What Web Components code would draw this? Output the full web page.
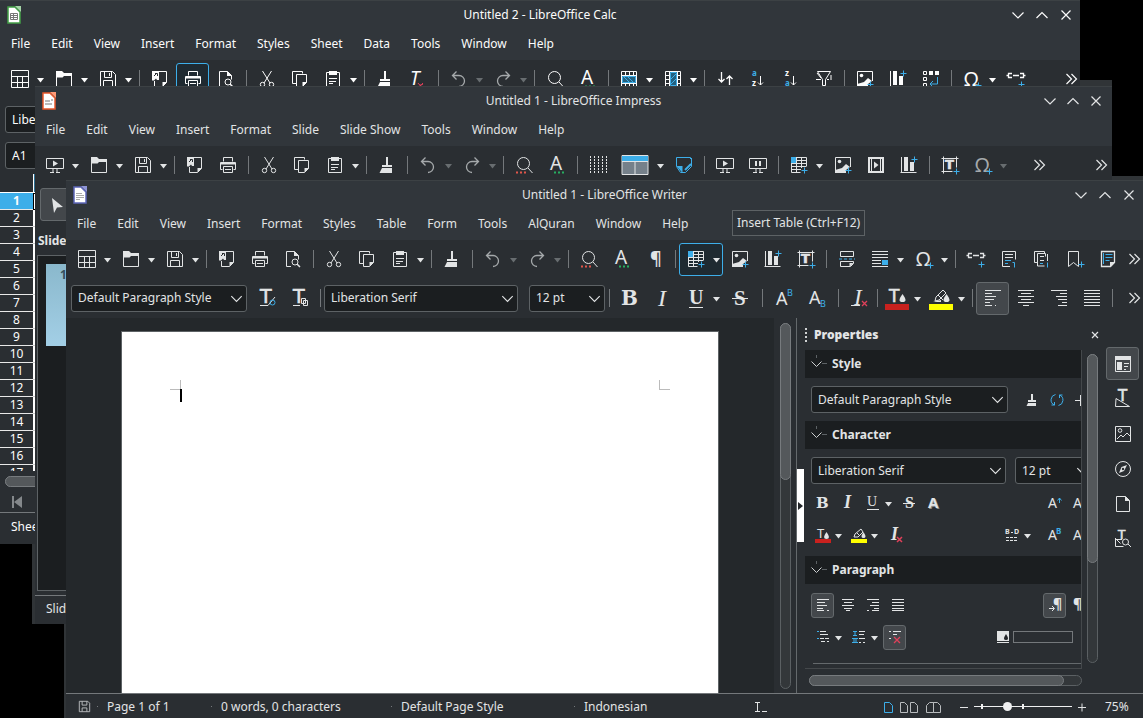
<!DOCTYPE html>
<html lang="en">
<head>
<meta charset="utf-8">
<title>LibreOffice windows</title>
<style>
  html, body { margin: 0; height: 100%; background: #000; overflow: hidden; }
  body { font: 12px/18px "Noto Sans", sans-serif; color: #fcfcfc; }
</style>
</head>
<body>
<office-desktop></office-desktop>

<script>
const plus = (x, y) => `<path class="b" d="M${x - 3} ${y}h6M${x} ${y - 3}v6"/>`;

/* Icons are drawn on an 18 x 18 grid */
const ICONS = {
  template: '<path d="M.5 .5h17v17h-17zM.5 6.5h17M.5 12.5h17M6.5 6.5v11M11.5 6.500v11"/>',
  open: '<path d="M1.5 5v11.5h15v-11h-8"/><path class="f" d="M1 1h6l2 2h8v3H9L7.5 7.500H1z"/>',
  save: '<path d="M1.500 1.500h12l3 3v12h-15zM5.500 1.500v6h7v-6M10.500 3v3M4.500 16.500v-6h9v6"/>',
  savesmall: '<path d="M3.500 3.500h9l2 2v9h-11zM6.500 3.500v4h5v-4M6.500 14.500v-4h5v4"/>',
  pdf: '<path d="M8 1.500h7.500v11l-4 4h-8V11"/><path class="f" d="M15.500 12v.500l-4 4v-4.500zM1 1h7v9H6L5 8.500 3 10.500H1z"/><path stroke="#2a2e32" d="M3 6l3-3M4 3.500h2.500V6"/>',
  print: '<path d="M4.500 5.500v-4h9v4M3.500 13.500h-2v-7h15v7h-2M4.500 10.500h9v6h-9zM6 13.500h6"/><path class="f" d="M2 6h14v2.500H2z"/>',
  preview: '<path d="M7 16.500H2.500v-15h8l4 4v4"/><path class="f" d="M10 1l5 5h-5z"/><circle cx="11" cy="12" r="3"/><path stroke-width="1.500" d="M13 14l3 3"/>',
  cut: '<path d="M4.500 1l7.500 12M13.500 1L6 13"/><circle cx="4.500" cy="14.500" r="2.200"/><circle cx="13.500" cy="14.500" r="2.200"/>',
  copy: '<path d="M5 13.500H1.500v-12h10v2M5.500 4.500h10v8l-4 4h-6z"/><path class="f" d="M15.500 12v.500l-4 4V12z"/>',
  paste: '<path d="M2.500 2.500h13v14h-13zM5 8.500h8M5 11.500h7M5 13.500h4"/><path class="f" d="M5 1h8v4H5z"/>',
  brush: '<path class="f" d="M8 1h2v8h4v2H4V9h4zM4 12h10v5H1.500z"/>',
  clear: '<text x="1" y="15" font-size="19" font-style="italic">T</text><path class="r" d="M9 13q2 4 5 0M9 17l5-3"/>',
  undo: '<path stroke-width="1.300" d="M6.500 1.500l-4 4 4 4M3 5.500h6a5.500 5.500 0 0 1 0 11"/>',
  redo: '<path stroke-width="1.300" d="M11.500 1.500l4 4-4 4M15 5.500H9a5.500 5.500 0 0 0 0 11"/>',
  find: '<circle cx="8.500" cy="7.500" r="6"/><path d="M13 12l4.500 5"/><path stroke="#e0564a" stroke-width="2" stroke-dasharray="2 2" d="M1 16.500h10"/>',
  findplain: '<circle cx="8.500" cy="7.500" r="6"/><path d="M13 12l4.500 5"/>',
  spell: '<text x="2" y="14" font-size="19">A</text><path stroke="#27ae60" stroke-width="2" stroke-dasharray="2 2" d="M6 16.500h11"/>',
  pilcrow: '<text x="4" y="15" font-size="18" font-weight="600">¶</text>',
  table: '<path d="M1.500 1.500h15v9M1.500 1.500v15h9M6.500 1v15M11.500 1v11M1 4.500h16M1 7.500h16M1 10.500h15M1 13.500h10"/><path class="bf" d="M1 1h5v6H1z"/>' + plus(14.5, 14.5),
  image: '<path d="M16.500 11V1.500h-15v15h9"/><path class="f" d="M1 17v-3l7-2 4-4 4 3-4 3v3z"/><circle class="f" cx="5.500" cy="5.500" r="1.800"/>' + plus(14.500, 14.500),
  chart: '<path d="M1.500 1v16M.500 16.500h16"/><path class="f" d="M4 1h4v14H4zM10 6h4v9h-4z"/>' + plus(14.5, 3.5),
  textbox: '<path d="M.500 2.500h17M2.500.500v17M15.500.500v11M.500 15.500h11"/><text x="4" y="13" font-size="13" font-weight="700" class="d">T</text>' + plus(15.500, 15.500),
  pagebreak: '<path d="M2.500 6.500v-5h13v5zM2.500 11.500h13v2l-3 3h-10z"/><path class="f" d="M15.500 13l-4 4v-4z"/><path class="b" stroke-dasharray="3 2" d="M1 9h16"/>',
  field: '<path d="M1 1.500h16M1 4.500h16M1 7.500h16M1 10.500h9M1 13.500h9M1 16.500h16"/><path class="bf" d="M11 10h6v5h-6z"/>',
  omega: '<text x="1" y="16" font-size="20">Ω</text>' + plus(15.5, 15.5),
  link: '<path stroke-width="1.300" d="M5 3.500h-3.500v4H5M13 3.500h3.500v4H13M6 5.500h6M-.500 5.500h2M16.500 5.500h2"/>' + plus(14.5, 14.5),
  footnote: '<path d="M10 16.500H2.500v-15h13v8M5 4.500h8M5 7.500h8"/><path class="b" d="M5 10.500h6M5 13.500h3M12.500 12.500h2v5"/>',
  endnote: '<path d="M4 12.500H1.500v-11h10v2M4.500 3.500h8v3M4.500 3.500v12.500h7M14.500 4v7M7 6.500h4M7 10.500h4"/><path class="b" d="M7 13.500h3M14.500 12.500v5"/>',
  bookmark: '<path d="M2.500 1.500h10v15l-5-4-5 4z"/>' + plus(15.5, 14.500),
  crossref: '<path stroke-width="1.300" d="M2.500 1.500h13v11l-4 4h-9z"/><path class="f" d="M16 12l-5 5v-5z"/><path class="b" d="M4.500 3v11M6.500 4.500h7M6.500 7.500h7M6.500 10.500h4"/>',
  more: '<path stroke-width="1.200" d="M4.500 4l5 5-5 5M9.500 4l5 5-5 5"/>',
  updstyle: '<text class="d" x="2" y="14" font-size="19">T</text><path d="M2 16.500h8L17 8"/><circle class="b" cx="14.500" cy="13.500" r="2.500"/>',
  newstyle: '<text class="d" x="2" y="14" font-size="19">T</text><path d="M2 16.500h7M10.500 9.500h4v5h-4zM12.500 11.500h4v5h-4z"/>',
  bold: '<text class="ds" x="0" y="16" font-size="20" font-weight="700">B</text>',
  italic: '<text class="s" x="4" y="17" font-size="24" font-style="italic">I</text>',
  underline: '<text class="s" x="2" y="15" font-size="20" font-weight="700">U</text><path d="M2 18.500h14"/>',
  strike: '<text class="s" x="3" y="16" font-size="21" font-weight="700">S</text><path d="M1 9.500h16"/>',
  super: '<text x="0" y="16" font-size="18">A</text><text class="bt" x="11" y="7" font-size="9">B</text>',
  sub: '<text x="0" y="15" font-size="18">A</text><text class="bt" x="11" y="18" font-size="9">B</text>',
  clearfmt: '<text class="s" x="4" y="16" font-size="23" font-style="italic">I</text><path d="M1 16.500h9"/><path class="r" stroke-width="1.300" d="M12 12l5 5M17 12l-5 5"/>',
  fontcolor: '<text class="d" x="1" y="13" font-size="17">T</text><path class="f" d="M14.500 5q6 8 0 8t0-8z"/><path fill="#c9211e" stroke="none" d="M-3 15h24v6H-3z"/>',
  marker: '<path d="M3 12l1-4 7-7 3 3-7 7zM6 6l5 5"/><path class="f" d="M14.500 5q6 8 0 8t0-8zM1 13h8v-2z"/><path fill="#ff0" stroke="none" d="M-3 15h24v6H-3z"/>',
  left: '<path d="M1 1.500h16M1 4.500h7M1 7.500h11M1 10.500h9M1 13.500h5M1 16.500h7M11 16.500h1"/>',
  center: '<path d="M1 1.500h16M4 4.500h10M1 7.500h16M4 10.500h10M1 13.500h16M6 16.500h6"/>',
  right: '<path d="M1 1.500h16M10 4.500h7M6 7.500h11M8 10.500h9M12 13.500h5M8 16.500h9"/>',
  justify: '<path d="M1 1.500h16M1 4.500h16M1 7.500h16M1 10.500h16M1 13.500h16M1 16.500h16"/>',
  present: '<path d="M.500 2.500h17v10H.500zM7 13v3M11 13v3M4 16.500h4M10 16.500h4"/><path class="f" d="M7 4.500l5 3-5 3z"/>',
  present2: '<path d="M.500 2.500h17v10H.500zM7 13v3M11 13v3M4 16.500h4M10 16.500h4"/><path class="f" d="M6 5h2v5H6zM10 5h2v5h-2z"/>',
  dots: '<path stroke-dasharray="2 1" d="M1.500 0v18M5.500 0v18M9.500 0v18M13.500 0v18M17.500 0v18"/>',
  layout: '<path fill="#75808a" d="M-4 -.500h26v19H-4z"/><path class="bf" d="M-4 0h26v5H-4z"/><path d="M-4 5.500h26M9 5.500v13"/>',
  comment: '<path class="b" d="M15.500 3V1.500h-14v9l4 6h5l6-6V2"/><path class="bf" d="M1.500 10h6v7z"/><path class="b" stroke-width="2" d="M10 14l6-6"/>',
  media: '<path stroke-width="2" d="M2 2h14v14H2z"/><path d="M4.500 2v14M13.500 2v14"/><path class="f" d="M7 5.500L11.500 9 7 12.500z"/>',
  rows: '<path d="M1.500 1.500h15v15h-15zM5.500 1v16M9.500 1v16M13.500 1v16M1 5.500h16M1 13.500h16"/><path fill="#23607f" class="b" d="M2.500 6.500h13v6h-13zM4 7l5 5M8 7l5 5"/>',
  cols: '<path d="M1.500 1.500h15v15h-15zM1 5.500h16M1 9.500h16M1 13.500h16M5.500 1v16M13.500 1v16"/><path fill="#23607f" class="b" d="M6.500 2.500h6v13h-6zM7 9l5-5M7 14l5-5"/>',
  sort: '<path stroke-width="1.300" d="M5.500 2v10M2.500 9l3 3 3-3M13.500 15V6M10.500 9l3-3 3 3"/>',
  sortaz: '<text class="bt" x="3" y="6" font-size="8" font-weight="700">a</text><text x="3" y="16" font-size="8" font-weight="700">z</text><path d="M11.500 6v9M9 12.500l2.500 2.500 2.500-2.500"/>',
  sortza: '<text x="3" y="6" font-size="8" font-weight="700">z</text><text class="bt" x="3" y="16" font-size="8" font-weight="700">a</text><path d="M11.500 6v9M9 12.500l2.500 2.500 2.500-2.500"/>',
  filter: '<path d="M2.500 1.500h13l-5 8v6h-3v-6zM1 9.500h5M12 9.500h2M16 5v5M2 3l4 5"/>',
  pivot: '<path d="M1.500 1.500h3v3h-3zM1.500 7.500h3v3h-3zM1.500 13.500h3v3h-3z"/><path class="f" d="M7 1h4v4H7zM13 1h4v4h-4z"/><path class="b" d="M15.500 7v7h-7M11 11l-3 3 3 3"/>',
  pointer: '<path class="f" d="M4 2l11 9-6 .500L6 17z"/>',
  properties: '<path d="M1.500 1.500h15v15h-15z"/><path class="f" d="M1 1h16v4H1zM3 7h5v8H3zM10 8h5v1h-5zM10 11h4v1h-4zM10 14h2v1h-2z"/>',
  styles: '<text class="d" x="4" y="11" font-size="15">T</text><path d="M1.500 16.500h14L2 8.500z"/>',
  gallery: '<path d="M1.500 1.500h15v15h-15zM3 14l4-4 2 2 4-4 3 3"/><circle cx="6" cy="5.500" r="1.800"/>',
  compass: '<circle cx="9" cy="9" r="7.500"/><path class="f" d="M13 5l-3 6-5 2 2.500-6z"/><circle cx="9" cy="9" r="1.200" fill="#2a2e32" stroke="none"/>',
  page: '<path d="M2.500 1.500h9l4 4v11h-13z"/><path class="f" d="M11 1l5 5h-5z"/>',
  inspect: '<text class="d" x="4" y="9" font-size="12">T</text><path d="M1.500 8v8.500h8M1.500 8.500l5 5M1 9.500h7"/><circle cx="11.500" cy="12" r="3"/><path d="M14 14l3 3"/>',
  view1: '<path class="b" d="M5.500 4.500h5l3 3v7h-8z"/>',
  view2: '<path d="M.500 4.500h4l3 3v7h-7zM10.500 4.500h4l3 3v7h-7z"/>',
  view3: '<path d="M1.500 14.500v-7l3-3h4v10zM8.500 4.500h4l3 3v7h-7z"/>',
  ibeam: '<path d="M3 4.500h5M3 13.500h5M5.500 4.500v9M10 13.500h5"/>',
  minus: '<path d="M5 9.500h8"/>',
  plus: '<path d="M5 9.500h8M9 5.500v8"/>',
  down: '<path stroke-width="1.200" d="M3.500 6.500L9 12l5.500-5.500"/>',
  up: '<path stroke-width="1.200" d="M3.500 12L9 6.500l5.500 5.500"/>',
  close: '<path stroke-width="1.200" d="M4.500 4.500l9 9M13.500 4.500l-9 9"/>',
  first: '<path class="f" d="M4 3h2v12H4zM14 3v12L6 9z"/>',
  calcdoc: '<path fill="#fff" stroke="#43a047" stroke-width="1.500" d="M3 1h7l5 5v11H3z"/><path fill="#a5d6a7" stroke="none" d="M10 0h6v6z"/><path stroke="#777" d="M5.500 7.500h7v6h-7zM5.500 9.500h7M5.500 11.500h7M8.500 7.500v6"/>',
  impressdoc: '<path fill="#fff" stroke="#e8582c" stroke-width="1.500" d="M3 1h7l5 5v11H3z"/><path fill="#ff9a76" stroke="none" d="M10 0h6v6z"/><path stroke="#bbb" stroke-width="2" d="M5 9h5M11 8h2M5 12h7"/>',
  writerdoc: '<path fill="#fff" stroke="#5c66b8" stroke-width="1.500" d="M3 1h7l5 5v11H3z"/><path fill="#8f96d8" stroke="none" d="M10 0h6v6z"/><path stroke="#aaa" d="M5 7.500h6M5 9.500h8M5 11.500h8M5 13.500h4"/>'
};

/* Small sidebar icons, on a 14 x 14 grid */
const MINI = {
  brush: '<path class="f" d="M6 1h2v6h3v2H3V7h3zM3 10h8v3H1.500z"/>',
  refresh: '<path class="b" d="M4.500 12A5.500 5.500 0 0 1 5.500 1.500M9.500 2a5.500 5.500 0 0 1-1 10.500M4.500 9v3H1.500M9.500 5V2h3"/>',
  add: '<path d="M5.500 2v11M0 7.500h11"/>',
  bold: '<text class="ds" x="0" y="12" font-size="15" font-weight="700">B</text>',
  italic: '<text class="s" x="3" y="12" font-size="18" font-weight="700" font-style="italic">I</text>',
  underline: '<text class="s" x="1" y="10" font-size="14">U</text><path d="M1 13.500h12"/>',
  strike: '<text class="s" x="3" y="12" font-size="16" font-weight="700">S</text><path d="M1 7.500h12"/>',
  shadow: '<text x="2" y="13" font-size="15" font-weight="700" opacity=".5">A</text><text x="1" y="12" font-size="15" font-weight="700">A</text>',
  grow: '<text x="0" y="12" font-size="14">A</text><path class="b" d="M11.500 7V2M9.500 4.500l2-2.500 2 2.500"/>',
  fontcolor: '<text x="1" y="10" font-size="13">T</text><path class="f" d="M10.500 4q5 7 0 7t0-7z"/><path fill="#c9211e" stroke="none" d="M-1 11h16v4H-1z"/>',
  marker: '<path d="M2 9l1-3 6-5 2 3-5 5zM5 5l3 3"/><path class="f" d="M11.500 4q4 6 0 6t0-6z"/><path fill="#ff0" stroke="none" d="M-1 11h16v4H-1z"/>',
  clearfmt: '<text class="s" x="3" y="12" font-size="18" font-weight="700" font-style="italic">I</text><path class="r" stroke-width="1.500" d="M9 9l5 5M14 9l-5 5"/>',
  super: '<text x="0" y="12" font-size="14">A</text><text class="bt" x="8" y="6" font-size="8" font-weight="700">B</text>',
  sub: '<text x="0" y="12" font-size="14">A</text><text class="bt" x="8" y="13" font-size="8" font-weight="700">B</text>',
  spacing: '<text x="0" y="6" font-size="7" font-weight="700">B</text><text x="9" y="6" font-size="7" font-weight="700">D</text><path stroke-dasharray="3 1" d="M6 4.500h2M1 9.500h12M1 12.500h12"/>',
  left: '<path d="M1 1.500h12M1 4.500h8M1 7.500h10M1 10.500h6M1 12.500h7M11 12.500h2"/>',
  center: '<path d="M1 1.500h12M3 4.500h8M1 7.500h12M3 10.500h8M5 12.500h4"/>',
  right: '<path d="M1 1.500h12M6 4.500h7M4 7.500h9M8 10.500h5M1 12.500h2M6 12.500h7"/>',
  justify: '<path d="M1 1.500h12M1 4.500h12M1 7.500h12M1 10.500h12M1 12.500h12"/>',
  ltr: '<text x="5" y="11" font-size="14" font-weight="700">¶</text><path d="M1 10.500h5M4 8l2.500 2.500L4 13"/>',
  pilcrow: '<text x="0" y="11" font-size="14" font-weight="700">¶</text>',
  bullets: '<path d="M4 1.500h6M4 4.500h8M4 8.500h4M9 8.500h4M5 11.500h4M11 11.500h2"/><path class="b" d="M1 1.500h2M1 8.500h2"/>',
  numbers: '<path d="M7 1.500h6M7 4.500h5M7 8.500h6M7 12.500h2M11 12.500h2"/><path class="b" d="M1 1.500h4M3 1.500v4M1 5.500h4M0 8.500h6M2 8.500v4M4 8.500v4M0 12.500h6"/>',
  nolist: '<path d="M5 1.500h8M5 4.500h4M1 1.500h2M1 8.500h2"/><path class="r" stroke-width="1.300" d="M6 7l6 6M12 7l-6 6"/>',
  paint: '<path class="f" d="M1 1h12v10H1zM1 12h12v1H1z"/><path fill="#232629" stroke="none" d="M10 4q4 6 0 6t0-6z"/>',
  close: '<path stroke-width="1.200" d="M4 4l6 6M10 4l-6 6"/>'
};

const ICON_CSS = `
  svg { display: block; flex: none; overflow: visible; fill: none; stroke: currentColor; }
  .f { fill: currentColor; stroke: none; }
  .b { stroke: #3daee9; }
  .bf { fill: #3daee9; stroke: none; }
  .r { stroke: #e0405a; }
  text { fill: currentColor; stroke: none; font-family: "Noto Sans", sans-serif; }
  text.s { font-family: "Liberation Serif", serif; }
  text.d { font-family: "DejaVu Sans", sans-serif; stroke: currentColor; stroke-width: .6; }
  text.ds { font-family: "DejaVu Serif", serif; }
  text.bt { fill: #3daee9; }
`;
const svg = (name, size = 18) =>
  `<svg viewBox="0 0 18 18" width="${size}" height="${size}" aria-hidden="true">${ICONS[name] || ''}</svg>`;
const mini = name =>
  `<svg viewBox="0 0 14 14" width="14" height="14" aria-hidden="true">${MINI[name] || ''}</svg>`;

class Base extends HTMLElement {
  connectedCallback() {
    if (this.shadowRoot) return;
    this.attachShadow({ mode: 'open' }).innerHTML =
      `<style>*{box-sizing:border-box}${ICON_CSS}${this.css()}</style>${this.html()}`;
  }
  a(name, fallback = '') { return this.getAttribute(name) ?? fallback; }
}

customElements.define('tool-button', class extends Base {
  css() { return `
    :host { display: flex; flex: none; }
    button { all: unset; box-sizing: border-box; display: flex; align-items: center; height: 33px; border: 1px solid transparent; border-radius: 3px; }
    .i { width: 31px; display: flex; justify-content: center; }
    .d { width: 11px; height: 5px; margin-top: 2px; display: flex; justify-content: center; }
    :host([kind=wide]) .i { width: 40px; }
    :host([kind=mini]) button { height: 25px; }
    :host([kind=mini]) .i { width: 21px; }
    :host([kind=tail]) .i { width: 16px; }
    :host([hot]) button { border-color: #3daee9; background: #1f2a31; }
    :host([on]) button { border-color: #64696c; background: #43474b; }
    :host([off]) { color: #a5a9ab; }
    :host([off]) .d { color: #686d70; }
    .d path { fill: currentColor; stroke: none; }`; }
  html() {
    const name = this.a('icon');
    return `<button type="button" aria-label="${this.a('label', name)}"><span class="i">${this.a('kind') === 'mini' ? mini(name) : svg(name)}</span>${
      this.hasAttribute('drop') ? '<span class="d"><svg width="7" height="5" viewBox="0 0 7 5"><path d="M0 0h7L3.500 4.500z"/></svg></span>' : ''}</button>`;
  }
});

customElements.define('tool-sep', class extends Base {
  css() { return `
    :host { display: flex; flex: none; width: 8px; justify-content: center; }
    :host([wide]) { width: 12px; }
    :host([narrow]) { width: 5px; }
    i { width: 1px; height: 18px; background: #74787b; }`; }
  html() { return '<i></i>'; }
});

/* List syntax: "icon", "icon+" with a drop-down arrow, "|" a divider, "!" disabled, "*" pressed, "#" hovered */
const tools = (list, kind = '') => list.trim().split(/\s+/).map(t => {
  if (t === '|') return '<tool-sep></tool-sep>';
  if (t === '|w') return '<tool-sep wide></tool-sep>';
  if (t === '|n') return '<tool-sep narrow></tool-sep>';
  const name = t.replace(/[^a-z0-9]/g, '');
  const k = name === 'layout' ? 'wide' : kind;
  return `<tool-button icon="${name}"${k ? ` kind="${k}"` : ''}${t.includes('+') ? ' drop' : ''}${
    t.includes('!') ? ' off' : ''}${t.includes('*') ? ' on' : ''}${t.includes('#') ? ' hot' : ''}></tool-button>`;
}).join('');

customElements.define('tool-bar', class extends Base {
  css() { return `
    :host { display: flex; align-items: center; height: 38px; padding: 0 var(--edge, 0) 0 4px; overflow: hidden; flex: none; }
    :host([tall]) { height: 40px; }
    .main { display: flex; align-items: center; flex: 1; min-width: 0; }`; }
  html() { return `<div class="main" role="toolbar"><slot></slot></div>${tools('more', 'tail')}`; }
});

customElements.define('combo-box', class extends Base {
  css() { return `
    :host { display: grid; flex: none; height: 27px; align-items: center; }
    select, .arrow { grid-area: 1 / 1; }
    select { appearance: none; width: 100%; height: 100%; padding: 0 24px 0 6px; margin: 0; font: inherit; color: inherit;
      background: #1b1e20; border: 1px solid #5d6265; border-radius: 3px; outline: none; }
    .arrow { justify-self: end; margin-right: 2px; pointer-events: none; }`; }
  html() { return `<select aria-label="${this.a('label')}"><option>${this.a('value')}</option></select><span class="arrow">${svg('down', 17)}</span>`; }
});

customElements.define('scroll-bar', class extends Base {
  css() { return `
    :host { display: flex; flex: none; width: 11px; border: 1px solid #5b6063; border-radius: 6px; background: #33373a; box-sizing: border-box; }
    :host([flat]) { width: auto; height: 11px; }
    i { display: block; width: 11px; margin: -1px; height: ${this.a('size')}; border: 1px solid #777b7e; border-radius: 6px; background: #54585b; }
    :host([flat]) i { height: 11px; width: ${this.a('size')}; }`; }
  html() { return '<i></i>'; }
});

customElements.define('app-window', class extends Base {
  css() { return `
    :host { position: absolute; display: flex; flex-direction: column; background: #2a2e32; }
    :host([halo])::before { content: ""; position: absolute; z-index: -1; inset: var(--halo, -6px 0 0 -3px); background: #303437; }
    header { flex: none; background: #31363b; border-top: 1px solid #3c4144; }
    .title { display: grid; grid-template-columns: 74px 1fr 74px; align-items: center; height: 27px; }
    .title > :first-child { padding-left: 5px; }
    h1 { margin: 0; font: inherit; text-align: center; }
    .ctl { display: flex; justify-content: flex-end; padding-right: calc(2px + var(--edge, 0px)); }
    .ctl button { all: unset; width: 24px; display: flex; justify-content: center; }
    nav { display: flex; height: 32px; align-items: center; padding-left: 1px; }
    nav button { all: unset; padding: 0 11px 0 10px; }
    .body { flex: 1; min-height: 0; display: flex; flex-direction: column; overflow: hidden; }`; }
  html() { return `
    <header>
      <div class="title"><span>${svg(this.a('icon'))}</span><h1>${this.a('name')}</h1>
        <span class="ctl"><button aria-label="Minimize">${svg('down', 18)}</button><button aria-label="Maximize">${svg('up', 18)}</button><button aria-label="Close">${svg('close', 18)}</button></span></div>
      <nav>${this.a('menus').split(',').map(m => `<button type="button">${m}</button>`).join('')}</nav>
    </header>
    <div class="body"><slot></slot></div>`; }
});

customElements.define('calc-body', class extends Base {
  css() { return `
    :host { flex: 1; min-height: 0; display: flex; flex-direction: column; }
    tool-bar { padding-left: 3px; }
    .line { padding: 8px 5px 0; height: 36px; }
    combo-box { width: 190px; }
    .line + .line combo-box { width: 110px; }
    .sheet { flex: 1; min-height: 0; overflow: hidden; padding-top: 4px; }
    table { border-collapse: separate; border-spacing: 0; width: 100%; table-layout: fixed; }
    th { width: 33px; height: 17px; padding: 0; font-weight: 400; line-height: 16px; border-bottom: 1px solid #e8e8e8; }
    tbody td { background: #fff; border-bottom: 1px solid #ccc; padding: 0; }
    thead th, thead td { height: 19px; border-bottom: 1px solid #fff; padding: 0; }
    thead td { background: #2f6f92; border-left: 1px solid #fff; }
    .cur th { background: #3daee9; font-weight: 700; }
    .cur td { border: 1px solid #000; }
    scroll-bar { margin: 5px 5px 0; }
    .tabs { height: 26px; padding: 6px 8px 0; color: #84888b; border-bottom: 1px solid #74787b; }
    footer { height: 31px; padding: 5px 11px; }`; }
  html() { return `
    <tool-bar>${tools('template+ open+ save+ | pdf print# preview | cut copy paste+ | brush clear | undo+! redo+! | findplain spell | rows+ cols+ | sort sortaz sortza filter | image chart pivot | omega+ link')}</tool-bar>
    <div class="line"><combo-box label="Font" value="Liberation Sans"></combo-box></div>
    <div class="line"><combo-box label="Name Box" value="A1"></combo-box></div>
    <div class="sheet"><table><thead><tr><th></th><td></td></tr></thead><tbody>${
      Array.from({ length: 17 }, (_, i) => `<tr${i ? '' : ' class="cur"'}><th scope="row">${i + 1}</th><td></td></tr>`).join('')}</tbody></table></div>
    <scroll-bar flat size="60%"></scroll-bar>
    <div class="tabs">${svg('first')}</div>
    <footer>Sheet 1 of 1</footer>`; }
});

customElements.define('impress-body', class extends Base {
  css() { return `
    :host { flex: 1; min-height: 0; display: flex; flex-direction: column; }
    tool-bar { padding-left: 3px; }
    .gap { width: 12px; }
    .tool { padding: 4px 5px 0; height: 48px; }
    h2 { margin: 0 3px; font: 700 12px/18px "Noto Sans", sans-serif; }
    .slides { flex: 1; width: 180px; margin: 5px 2px 4px; padding: 8px; background: #1b1e20; border: 1px solid #5d6265; }
    .thumb { height: 82px; padding: 2px 14px; background: linear-gradient(#8ab8cc, #a3cfe6); color: #35505c; font-weight: 700; }
    footer { height: 29px; padding: 4px 11px; border-top: 1px solid #74787b; }`; }
  html() { return `
    <tool-bar>${tools('present+ open+ save+ | pdf print | cut copy paste+ | brush | undo+! redo+! | find spell | dots layout+ comment | present present2 | table+ image media chart | textbox omega+!')}<span class="gap"></span>${tools('more')}</tool-bar>
    <div class="tool">${tools('pointer*')}</div>
    <h2>Slides</h2>
    <div class="slides"><div class="thumb">1</div></div>
    <footer>Slide 1 of 1</footer>`; }
});

customElements.define('side-section', class extends Base {
  css() { return `
    :host { display: block; }
    h3 { display: flex; align-items: center; gap: 6px; height: 28px; margin: 0; padding-left: 3px; background: #1b1e20; font: 700 12px/18px "Noto Sans", sans-serif; }
    h3 svg { color: #cdd0d1; }`; }
  html() { return `<h3><svg viewBox="0 0 18 18" width="18" height="18"><path stroke="#5d6265" d="M8.500 0v3M14 8.500h5"/><path d="M3.500 6.500l5 5 5-5"/></svg>${this.a('name')}</h3><slot></slot>`; }
});

customElements.define('side-bar', class extends Base {
  css() { return `
    :host { display: flex; flex-direction: column; width: 297px; flex: none; min-height: 0; }
    .head { display: flex; align-items: center; height: 33px; margin-bottom: -1px; gap: 7px; font-weight: 700; }
    .grip { height: 14px; background: repeating-linear-gradient(#d0d2d3 0 2px, transparent 2px 4px); width: 2px; }
    .head b { flex: 1; }
    .head button { all: unset; width: 14px; }
    .view { flex: 1; min-height: 0; display: grid; grid-template-columns: 1fr 20px; }
    .clip { overflow: hidden; border: 0 solid #44484b; border-width: 0 1px 1px 0; }
    .view scroll-bar { margin: 4px 0 6px 5px; }
    .pad { width: 282px; padding: 8px 0 8px 6px; box-sizing: content-box; }
    .row { display: flex; align-items: center; justify-content: space-between; height: 32px; }
    .only { height: 27px; }
    .top { height: 27px; margin-bottom: 3px; }
    .low { padding-bottom: 5px; }
    .tight { padding-top: 5px; }
    .g { display: flex; gap: 2px; align-items: center; }
    .wide { gap: 9px; }
    .end { margin-right: 2px; }
    .c1 { width: 197px; } .c2 { width: 195px; } .c3 { width: 78px; }
    .fill { display: flex; gap: 3px; align-items: center; margin-right: 20px; }
    .fill i { width: 60px; height: 12px; border: 1px solid #74787b; }
    hr { border: 0; border-top: 1px solid #64696c; margin: 5px 0 0 8px; }
    .flat { margin: 6px 20px 7px 4px; }`; }
  html() { return `
    <div class="head"><span class="grip"></span><b>Properties</b><button type="button" aria-label="Close sidebar">${mini('close')}</button></div>
    <div class="view"><div class="clip">
      <side-section name="Style"><div class="pad"><div class="row only"><combo-box class="c1" label="Paragraph style" value="Default Paragraph Style"></combo-box><span class="g">${tools('brush refresh add', 'mini')}</span></div></div></side-section>
      <side-section name="Character"><div class="pad low">
        <div class="row top"><combo-box class="c2" label="Font" value="Liberation Serif"></combo-box><combo-box class="c3" label="Size" value="12 pt"></combo-box></div>
        <div class="row"><span class="g">${tools('bold italic underline+ strike shadow', 'mini')}</span><span class="g end">${tools('grow grow', 'mini')}</span></div>
        <div class="row"><span class="g">${tools('fontcolor+ marker+ clearfmt', 'mini')}</span><span class="g wide end">${tools('spacing+', 'mini')}<span class="g">${tools('super sub', 'mini')}</span></span></div>
      </div></side-section>
      <side-section name="Paragraph"><div class="pad low tight">
        <div class="row"><span class="g">${tools('left* center right justify', 'mini')}</span><span class="g end">${tools('ltr* pilcrow', 'mini')}</span></div>
        <div class="row"><span class="g">${tools('bullets+ numbers+ nolist*', 'mini')}</span><span class="fill">${mini('paint')}<i></i></span></div>
      </div><hr></side-section>
    </div><scroll-bar size="68%"></scroll-bar></div>
    <scroll-bar class="flat" flat size="94%"></scroll-bar>`; }
});

customElements.define('status-bar', class extends Base {
  css() { return `
    :host { display: flex; align-items: center; height: 25px; padding-top: 1px; box-sizing: border-box; flex: none; border-top: 1px solid #74787b; }
    .cells { display: grid; grid-template-columns: 31px 114px 180px 183px 1fr; flex: 1; align-items: center; white-space: nowrap; }
    .cells > span { padding-left: 10px; }
    .cells > span + span { background: linear-gradient(#74787b, #74787b) 0 50% / 1px 1px no-repeat; }
    .save { color: #b9bcbe; }
    .views { display: flex; gap: 3px; color: #b9bcbe; padding: 0 12px 0 17px; }
    .views svg:nth-child(2) { margin-right: 4px; }
    .ib { width: 110px; }
    .zoom { display: flex; align-items: center; }
    .zoom button { all: unset; display: flex; }
    input { appearance: none; width: 98px; height: 9px; margin: 0 1px; outline: none; color: #eff0f1;
      background: linear-gradient(currentColor, currentColor) 7px 50% / 2px 5px no-repeat, linear-gradient(currentColor, currentColor) 48px 50% / 2px 5px no-repeat, linear-gradient(currentColor, currentColor) 50% 50% / 100% 1px no-repeat; }
    input::-webkit-slider-thumb { appearance: none; width: 9px; height: 9px; border-radius: 50%; background: #eff0f1; }
    output { width: 52px; padding-left: 14px; }`; }
  html() { return `
    <div class="cells"><span class="save">${svg('savesmall', 17)}</span><span>Page 1 of 1</span><span>0 words, 0 characters</span><span>Default Page Style</span><span>Indonesian</span></div>
    <div class="ib">${svg('ibeam', 18)}</div>
    <div class="views">${svg('view1', 18)}${svg('view2', 18)}${svg('view3', 18)}</div>
    <div class="zoom"><button aria-label="Zoom out">${svg('minus')}</button><input type="range" aria-label="Zoom" min="0" max="100" value="33"><button aria-label="Zoom in">${svg('plus')}</button></div>
    <output>75%</output>`; }
});

customElements.define('writer-body', class extends Base {
  css() { return `
    :host { flex: 1; min-height: 0; display: flex; flex-direction: column; }
    .para { width: 176px; margin: 0 3px 0 1px; } .font { width: 194px; margin-right: 11px; } .size { width: 76px; }
    .main { flex: 1; min-height: 0; display: flex; }
    .doc { flex: 1; min-width: 0; padding: 14px 56px 0; background: #24282b; display: flex; }
    .page { flex: 1; background: #fff; box-shadow: 0 0 0 1px #5d6265; padding: 48px 48px 0; display: flex; justify-content: space-between; align-items: flex-start; }
    .mark { width: 11px; height: 10px; border: 0 solid #bbb; border-width: 0 0 1px 1px; }
    .mark.l { border-width: 0 1px 1px 0; }
    .caret { width: 2px; height: 13px; margin: 9px auto 0 -1px; background: #000; }
    .doc + scroll-bar { margin: 5px 5px 4px 6px; }
    .split { width: 9px; display: flex; align-items: center; border-left: 1px solid #64696c; }
    .split button { all: unset; width: 7px; height: 73px; background: #fff; color: #232629; display: flex; align-items: center; }
    .deck { width: 41px; padding: 29px 0 0 4px; display: flex; flex-direction: column; gap: 2px; }`; }
  html() { return `
    <tool-bar>${tools('template+ open+ save+ | pdf print preview | cut copy paste+ | brush | undo+! redo+! | find spell pilcrow | table+# image chart textbox | pagebreak field+ omega+ | link footnote endnote bookmark crossref')}</tool-bar>
    <tool-bar tall><combo-box class="para" label="Paragraph style" value="Default Paragraph Style"></combo-box>${tools('updstyle newstyle |')}
      <combo-box class="font" label="Font name" value="Liberation Serif"></combo-box><combo-box class="size" label="Font size" value="12 pt"></combo-box>${
      tools('| bold italic underline+ strike |w super sub | clearfmt |n fontcolor+ marker+ | left* center right justify |')}</tool-bar>
    <div class="main">
      <div class="doc"><div class="page"><span class="mark l"></span><span class="caret"></span><span class="mark"></span></div></div>
      <scroll-bar size="43%"></scroll-bar>
      <div class="split"><button type="button" aria-label="Hide sidebar"><svg width="6" height="8" viewBox="0 0 6 8"><path class="f" d="M1 0l5 4-5 4z"/></svg></button></div>
      <side-bar></side-bar>
      <div class="deck">${tools('properties* styles gallery compass page inspect')}</div>
    </div>
    <status-bar></status-bar>`; }
});

customElements.define('office-desktop', class extends Base {
  css() { return `
    :host { display: block; position: relative; z-index: 0; height: 100vh; overflow: hidden; background: #000; }
    .calc { inset: 0 63px 174px 0; }
    .impress { inset: 86px 31px 94px 35px; color: #e2e4e5; --edge: 2px; }
    .writer { inset: 180px 0 0 66px; color: #e2e4e5; --halo: -4px 0 0 -2px; }
    .tip { position: absolute; left: 732px; top: 210px; padding: 3px 4px; background: #2f3439; border: 1px solid #5d6265; color: #e2e4e5; }`; }
  html() { return `
    <app-window class="calc" icon="calcdoc" name="Untitled 2 - LibreOffice Calc" menus="File,Edit,View,Insert,Format,Styles,Sheet,Data,Tools,Window,Help"><calc-body></calc-body></app-window>
    <app-window class="impress" halo icon="impressdoc" name="Untitled 1 - LibreOffice Impress" menus="File,Edit,View,Insert,Format,Slide,Slide Show,Tools,Window,Help"><impress-body></impress-body></app-window>
    <app-window class="writer" halo icon="writerdoc" name="Untitled 1 - LibreOffice Writer" menus="File,Edit,View,Insert,Format,Styles,Table,Form,Tools,AlQuran,Window,Help"><writer-body></writer-body></app-window>
    <div class="tip" role="tooltip">Insert Table (Ctrl+F12)</div>`; }
});
</script>
</body>
</html>
